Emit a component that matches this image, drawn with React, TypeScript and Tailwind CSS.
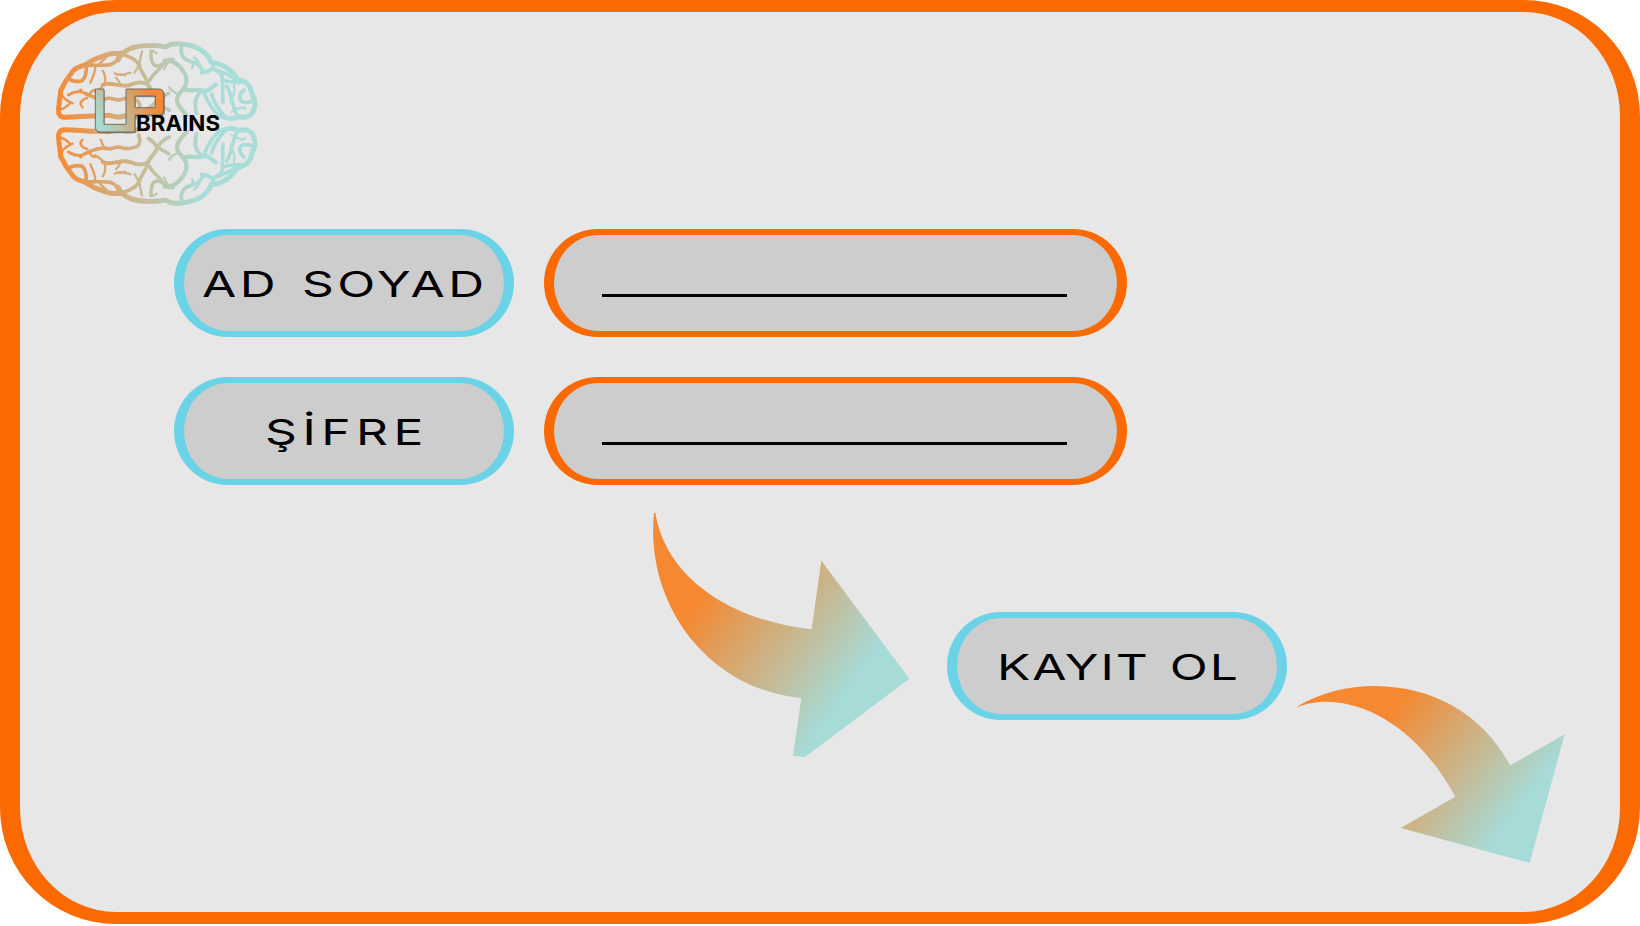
import type { ReactNode } from "react";

function Pill({ tone, className, children }: { tone: "sky" | "orange"; className: string; children: ReactNode }) {
  const border = tone === "sky" ? "border-[#6ad3e8]" : "border-[#fb6a00]";
  return (
    <div className={`flex h-[108px] shrink-0 rounded-[60px] border-x-10 border-y-6 bg-[#cdcdcd] ${border} ${className}`}>
      {children}
    </div>
  );
}

function Caption({ className, children }: { className: string; children: ReactNode }) {
  return (
    <span className={`mt-0.5 block h-[44px] shrink-0 origin-left scale-x-[1.38] whitespace-pre font-['Inter',sans-serif] text-[36px] leading-[44px] text-black ${className}`}>
      {children}
    </span>
  );
}

function BrainHalf() {
  return (
    <g fill="none" stroke="url(#brain)" strokeLinecap="round" strokeLinejoin="round">
      <g strokeWidth="15">
        <path d="M290 262C275 262 262 252 245 260C230 266 215 252 195 257C150 256 110 262 75 262C54 262 54 245 57 225C58 210 62 195 62 182C70 165 85 140 99 123C110 109 125 110 140 102C160 86 185 80 205 73C215 69 228 72 242 70" />
        <path d="M234 90C240 75 255 62 275 54C300 46 345 44 378 51C387 43 405 39 430 43C470 48 500 62 514 98C545 98 575 120 592 147C620 155 633 167 635 190C644 205 648 225 641 240C635 260 615 264 595 260C580 268 560 266 545 258" />
        <path d="M188 165C210 152 240 174 270 165C290 155 318 155 326 168C332 180 345 190 352 208" strokeWidth="12" />
        <path d="M374 92C395 90 415 98 432 127C442 142 442 162 430 178C414 192 408 202 412 217C416 230 430 245 440 255" strokeWidth="13" />
        <path d="M430 178C450 186 475 175 490 182C505 188 512 172 528 164" strokeWidth="13" />
      </g>
      <g strokeWidth="11">
        <path d="M140 106C165 104 190 108 212 104C226 98 236 90 234 76" />
        <path d="M138 106C141 125 136 146 126 152C115 156 100 153 92 150" />
        <path d="M240 72C265 76 290 90 298 106C302 125 318 140 326 165" />
        <path d="M425 46C420 75 430 88 450 94C475 98 480 110 492 126" />
        <path d="M518 97C524 115 508 126 485 128" />
        <path d="M520 115C542 130 552 135 547 160C550 175 546 195 549 218" />
        <path d="M525 120C550 124 575 140 597 154M548 150C565 157 585 155 600 158" />
        <path d="M485 182C465 200 462 225 470 250" />
        <path d="M492 186C500 210 515 238 540 260" />
        <path d="M515 192C520 215 535 238 558 264" />
        <path d="M195 207C215 198 225 216 245 208C260 200 275 208 288 210C300 215 302 230 296 246" />
        <path d="M85 195C110 180 125 184 135 190C145 195 160 200 172 206" strokeWidth="8" />
        <path d="M135 190C155 200 175 206 195 207" />
        <path d="M560 168C575 190 572 215 590 252M612 180C598 190 596 205 605 214C615 220 630 216 636 214" />
        <path d="M330 150C340 128 360 122 374 96" />
        <path d="M352 208C345 220 335 230 325 236M352 208C365 205 375 195 386 190M352 208C362 225 375 235 388 240" />
      </g>
      <g strokeWidth="7">
        <path d="M166 108C166 125 160 140 151 158M180 100C188 90 198 84 204 76" />
        <path d="M188 122C200 140 196 152 194 164M165 185C176 180 184 174 190 166" />
        <path d="M224 130C238 138 252 134 272 128M230 134C240 130 245 134 255 136" />
        <path d="M298 106C300 90 302 78 306 64M298 106C290 115 288 122 284 128" />
        <path d="M333 64C332 85 336 106 350 108C360 108 366 104 372 100" strokeWidth="10" />
        <path d="M62 190C70 207 85 215 98 220M62 238C72 236 80 230 88 222" />
        <path d="M128 232C115 222 124 208 142 204M120 180C122 178 123 178 126 182M150 190C155 182 160 180 166 180" />
        <path d="M480 105C475 92 468 86 462 82M452 96C460 100 462 108 456 114" />
        <path d="M582 165C586 185 580 200 572 216M575 246C590 240 605 226 616 236" />
        <path d="M192 208C188 216 186 224 182 232M240 160C236 150 232 148 228 144" />
        <path d="M385 96C378 105 374 112 372 118M350 70C345 66 340 62 333 62" />
        <path d="M410 190C400 186 392 180 388 172M373 92C385 86 395 84 402 88" />
      </g>
    </g>
  );
}

function Logo() {
  return (
    <svg className="mt-6 ml-[30px] h-[174px] w-[212px] shrink-0" viewBox="50 36 212 174" role="img">
      <defs>
        <linearGradient id="brain" gradientUnits="userSpaceOnUse" x1="60" y1="265" x2="500" y2="215">
          <stop offset="0" stopColor="#f58a36" />
          <stop offset="1" stopColor="#a8ddd9" />
        </linearGradient>
        <linearGradient id="mark" gradientUnits="userSpaceOnUse" x1="35" y1="145" x2="215" y2="45">
          <stop offset="0.05" stopColor="#a8dad2" />
          <stop offset="0.5" stopColor="#ccae80" />
          <stop offset="0.9" stopColor="#f08a3a" />
        </linearGradient>
      </defs>
      <g transform="translate(40 30) scale(.33333)">
        <BrainHalf />
      </g>
      <g transform="translate(40 217) scale(.33333 -.33333)">
        <BrainHalf />
      </g>
      <g transform="translate(86 80) scale(.33333)">
        <path
          d="M28 29H54V134H120V29H220Q235 29 235 44V92Q235 107 220 107H147V157H44Q28 157 28 141ZM147 49V83H208V49Z"
          transform="translate(2 3)"
          fill="#555"
          fillOpacity=".55"
          fillRule="evenodd"
        />
        <path
          d="M28 27H54V133H120V27H218Q233 27 233 42V90Q233 105 218 105H147V156H44Q28 156 28 140ZM147 48V83H208V48Z"
          fill="url(#mark)"
          fillRule="evenodd"
          stroke="#5b5f5a"
          strokeWidth="2.5"
        />
      </g>
      <text x="136" y="130.7" textLength="84" lengthAdjust="spacingAndGlyphs" className="font-['Inter',sans-serif] text-[21.5px] font-bold">
        BRAINS
      </text>
    </svg>
  );
}

function ArrowToRegister() {
  return (
    <svg className="mt-[5px] ml-[620px] h-[280px] w-[290px] shrink-0" viewBox="0 0 870 840">
      <linearGradient id="arrowA" gradientUnits="userSpaceOnUse" x1="165" y1="340" x2="594" y2="647">
        <stop offset="0" stopColor="#f58830" />
        <stop offset="1" stopColor="#a6dbd7" />
      </linearGradient>
      <path d="M42 69H46C75 250 250 388 515 418L544 212L808 566L494 802L459 797L484 625C200 595 15 340 42 69Z" fill="url(#arrowA)" />
    </svg>
  );
}

function ArrowToCorner() {
  return (
    <svg className="mt-[185px] ml-[3px] h-[210px] w-[290px] shrink-0" viewBox="30 0 870 630">
      <linearGradient id="arrowB" gradientUnits="userSpaceOnUse" x1="350" y1="100" x2="738" y2="391">
        <stop offset="0" stopColor="#f58830" />
        <stop offset="1" stopColor="#a6dbd7" />
      </linearGradient>
      <path d="M48 112C120 67 205 48 285 48C460 50 605 130 691 286L854 193L749 579L362 474L526 380C430 205 290 98 140 95C105 95 75 102 48 112Z" fill="url(#arrowB)" />
    </svg>
  );
}

function Field() {
  return (
    <Pill tone="orange" className="w-[583px]">
      <div className="mt-[59px] ml-12 h-[3px] w-[465px] bg-black" />
    </Pill>
  );
}

export default function App() {
  return (
    <div className="h-[926px] w-[1640px] overflow-hidden bg-white">
      <main className="flex h-[924px] flex-col rounded-[116px] border-x-20 border-y-12 border-[#fb6a00] bg-[#e7e7e7]">
        <Logo />
        <section className="mt-[19px] ml-[154px] flex flex-col gap-10">
          <div className="flex gap-[30px]">
            <Pill tone="sky" className="w-[340px] items-center pl-[18px]">
              <Caption className="tracking-[2.5px] [word-spacing:4px]">AD SOYAD</Caption>
            </Pill>
            <Field />
          </div>
          <div className="flex gap-[30px]">
            <Pill tone="sky" className="w-[340px] items-center pl-[81px]">
              <Caption className="tracking-[4px]">ŞİFRE</Caption>
            </Pill>
            <Field />
          </div>
        </section>
        <section className="flex items-start">
          <ArrowToRegister />
          <Pill tone="sky" className="mt-[127px] ml-[17px] w-[340px] items-center pl-10">
            <Caption className="tracking-[1.4px] [word-spacing:3px]">KAYIT OL</Caption>
          </Pill>
          <ArrowToCorner />
        </section>
      </main>
    </div>
  );
}
